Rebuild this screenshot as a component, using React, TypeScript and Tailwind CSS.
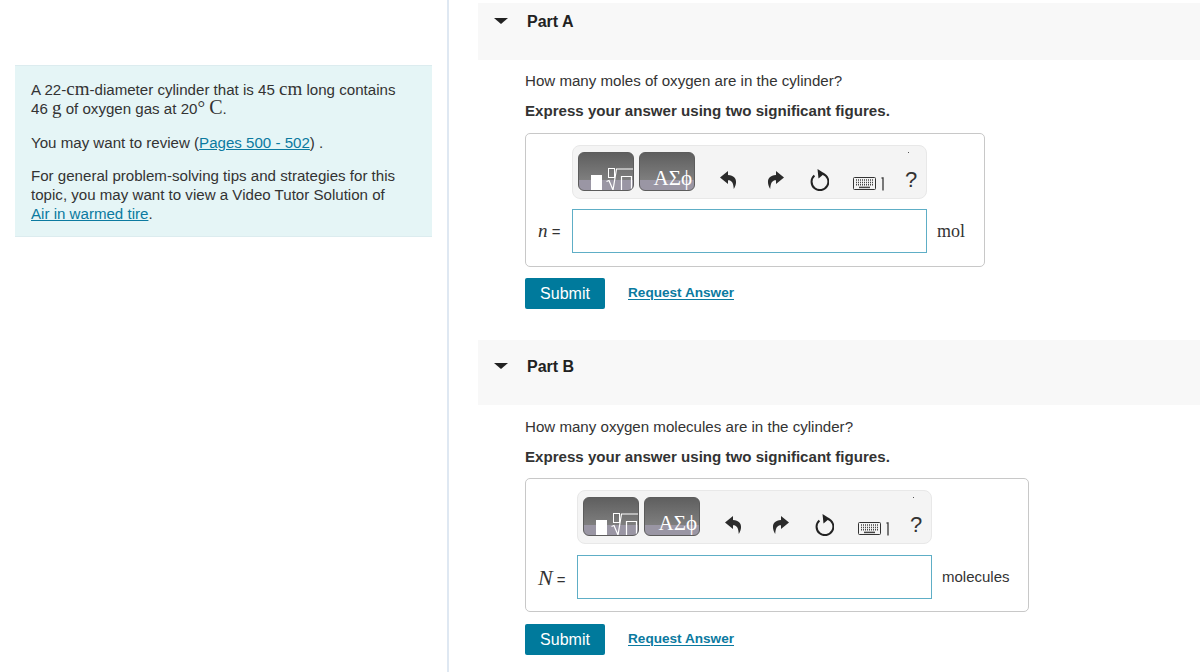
const sans = { fontFamily: '"Liberation Sans", Arial, sans-serif' };

function Rm({ children, size = 'text-[19px]' }: { children: string; size?: string }) {
  return <span className={`font-['Liberation_Serif',serif] leading-[0] ${size}`}>{children}</span>;
}

const buttonCls =
  'w-[56px] h-[39px] rounded-[6px] border border-[#5c5c5c] bg-[linear-gradient(#5f5f5f_0%,#7e7e7e_72%,#9a96a4_73%,#9a96a4_100%)] flex items-end overflow-hidden';

function TemplatesButton() {
  return (
    <div className={buttonCls}>
      <svg width="54" height="37" viewBox="0 0 54 37" fill="none">
        <rect x="12" y="22" width="11" height="15" fill="#fff" />
        <rect x="29.5" y="15.5" width="6" height="9" stroke="#fff" strokeWidth="1" />
        <path d="M27.5 28.5l2.5-1 4 9.5 3.5-21H54" stroke="#fff" strokeWidth="1.2" />
        <path d="M42.5 37V23.5h10V37" stroke="#fff" strokeWidth="1.2" />
      </svg>
    </div>
  );
}

function SymbolsButton() {
  return (
    <div className={`${buttonCls} justify-end pr-[2px]`}>
      <span className="font-['Liberation_Serif',serif] text-[21px] leading-[24px] text-white">ΑΣϕ</span>
    </div>
  );
}

function ArrowIcon({ flip }: { flip?: boolean }) {
  return (
    <svg width="17" height="18" viewBox="0 0 17 18" className={flip ? '-scale-x-100' : ''}>
      <path d="M8 0L0 6.5 8 13V9.2c3.8 0 5.4 2.6 5.8 8.8 3.6-6.2 3.6-13.4-5.8-14z" fill="#2b2b2b" />
    </svg>
  );
}

function ResetIcon() {
  return (
    <svg width="19" height="22" viewBox="0 0 19 22" fill="none">
      <path d="M4.4 6.4a8.4 8.4 0 1 0 8.4-1.6" stroke="#222" strokeWidth="2" />
      <path d="M7.5 0l7 4.6-6 5z" fill="#222" />
    </svg>
  );
}

function KeyboardIcon() {
  return (
    <svg width="32" height="14" viewBox="0 0 32 14" fill="none">
      <rect x="0.5" y="0.5" width="22" height="12" rx="1" stroke="#333" />
      <path d="M3 3h17M3 5.4h17M3 7.8h17" stroke="#444" strokeWidth="1.5" strokeDasharray="1 1" />
      <path d="M6 10.4h11" stroke="#444" strokeWidth="1.5" />
      <path d="M28.5 1h1.5v12.5" stroke="#444" strokeWidth="1.4" />
    </svg>
  );
}

function Toolbar() {
  return (
    <div className="relative w-[355px] h-[54px] rounded-[8px] border border-[#e8e8e8] bg-[#f4f4f4] flex items-start pl-[5px] pt-[6px]">
      <div className="flex gap-[5px]">
        <TemplatesButton />
        <SymbolsButton />
      </div>
      <div className="ml-[25px] mt-[19px]"><ArrowIcon /></div>
      <div className="ml-[30px] mt-[19px]"><ArrowIcon flip /></div>
      <div className="ml-[26px] mt-[17px]"><ResetIcon /></div>
      <div className="ml-[24px] mt-[25px]"><KeyboardIcon /></div>
      <span className="ml-[20px] mt-[15px] text-[22px] leading-[26px] text-[#333]">?</span>
      <span className="absolute right-[17px] top-[6px] w-[1px] h-[1px] bg-[#555]" />
    </div>
  );
}

function SubmitRow({ top }: { top: string }) {
  return (
    <div className={`flex items-center ${top}`}>
      <button className="w-[80px] h-[31px] rounded-[2px] bg-[#007a9c] text-white text-[16px]">Submit</button>
      <a className="ml-[23px] text-[13.6px] font-bold text-[#0b7aa0] underline underline-offset-2">Request Answer</a>
    </div>
  );
}

function PartHeader({ title, height, arrowTop, titleTop }: { title: string; height: string; arrowTop: string; titleTop: string }) {
  return (
    <div className={`${height} bg-[#f8f8f8] flex items-start pl-[16px]`}>
      <span className={`${arrowTop} w-0 h-0 border-x-[7px] border-x-transparent border-t-[6px] border-t-[#222]`} />
      <h2 className={`ml-[19px] ${titleTop} text-[16px] leading-[20px] font-bold text-[#222]`}>{title}</h2>
    </div>
  );
}

export default function App() {
  return (
    <div className="flex w-[1200px] h-[672px] overflow-hidden bg-white text-[#333]" style={sans}>
      <aside className="w-[449px] shrink-0 border-r-2 border-[#dfe8f2] pt-[65px] pl-[15px] pr-[15px]">
        <div className="w-[417px] h-[172px] border-y border-[#dcecef] bg-[#e5f5f6] pl-[16px] pt-[14px] text-[15.1px] leading-[19px] whitespace-nowrap">
          <p>A 22-<Rm>cm</Rm>-diameter cylinder that is 45 <Rm>cm</Rm> long contains<br />46 <Rm>g</Rm> of oxygen gas at 20<Rm>°</Rm> <Rm size="text-[20px]">C</Rm>.</p>
          <p className="mt-[15px]">You may want to review (<a className="text-[#0b7aa0] underline">Pages 500 - 502</a>) .</p>
          <p className="mt-[14px]">For general problem-solving tips and strategies for this<br />topic, you may want to view a Video Tutor Solution of<br /><a className="text-[#0b7aa0] underline">Air in warmed tire</a>.</p>
        </div>
      </aside>

      <main className="flex-1 pl-[29px] pt-[3px]">
        <PartHeader title="Part A" height="h-[57px]" arrowTop="mt-[15px]" titleTop="mt-[9px]" />
        <section className="pl-[47px]">
          <p className="mt-[11px] text-[15.1px] leading-[20px]">How many moles of oxygen are in the cylinder?</p>
          <p className="mt-[10px] text-[15.1px] leading-[20px] font-bold">Express your answer using two significant figures.</p>
          <div className="mt-[12px] w-[460px] h-[134px] rounded-[5px] border border-[#c8c8c8] pt-[11px] pl-[46px]">
            <Toolbar />
            <div className="flex items-center mt-[10px]">
              <span className="-ml-[34px] w-[34px] text-[15px] text-[#333]"><i className="font-['Liberation_Serif',serif] text-[19px]">n</i> =</span>
              <div className="w-[355px] h-[44px] border border-[#5eaec6] bg-white" />
              <span className="ml-[10px] font-['Liberation_Serif',serif] text-[18px] text-[#333]">mol</span>
            </div>
          </div>
          <SubmitRow top="mt-[11px]" />
        </section>

        <div className="mt-[31px]">
          <PartHeader title="Part B" height="h-[65px]" arrowTop="mt-[23px]" titleTop="mt-[17px]" />
        </div>
        <section className="pl-[47px]">
          <p className="mt-[12px] text-[15.1px] leading-[20px]">How many oxygen molecules are in the cylinder?</p>
          <p className="mt-[10px] text-[15.1px] leading-[20px] font-bold">Express your answer using two significant figures.</p>
          <div className="mt-[11px] w-[504px] h-[134px] rounded-[5px] border border-[#c8c8c8] pt-[11px] pl-[51px]">
            <Toolbar />
            <div className="flex items-center mt-[11px]">
              <span className="-ml-[39px] w-[39px] text-[15px] text-[#333]"><i className="font-['Liberation_Serif',serif] text-[22px]">N</i> =</span>
              <div className="w-[355px] h-[44px] border border-[#5eaec6] bg-white" />
              <span className="ml-[10px] text-[15px] text-[#333]">molecules</span>
            </div>
          </div>
          <SubmitRow top="mt-[12px]" />
        </section>
      </main>
    </div>
  );
}
